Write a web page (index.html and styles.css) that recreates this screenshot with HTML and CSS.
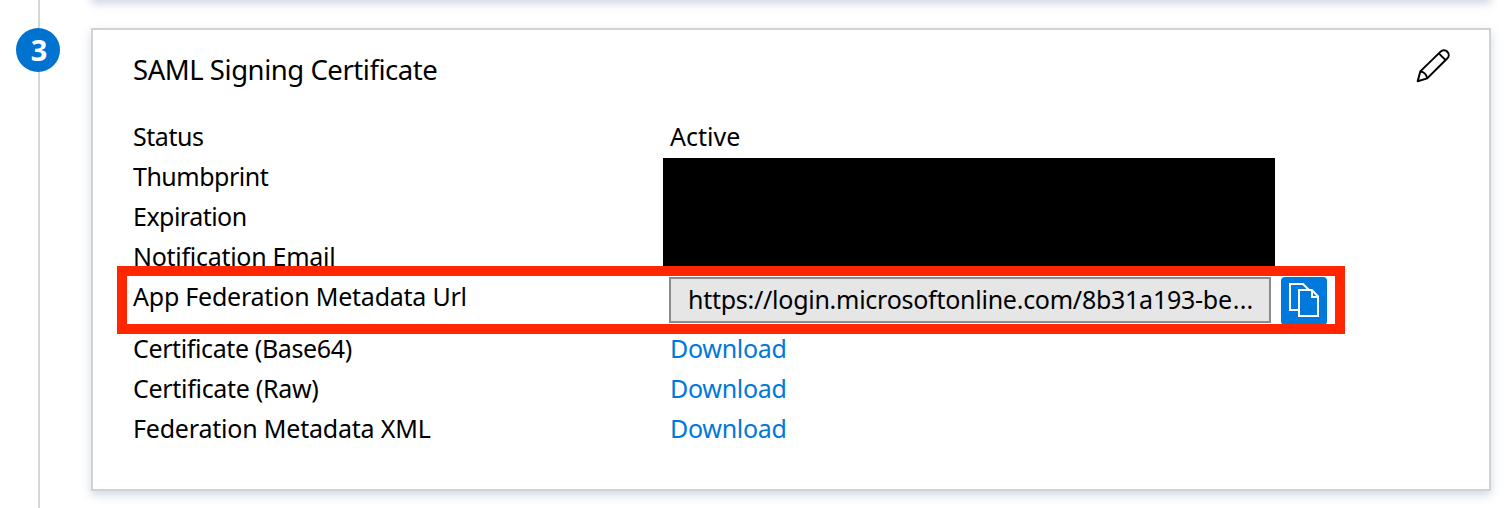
FILE: index.html
```html
<!DOCTYPE html>
<html lang="en">
<head>
<meta charset="utf-8">
<title>SAML Signing Certificate</title>
<link rel="stylesheet" href="styles.css">
</head>
<body>
<main class="steps">
  <div class="rail"><span class="step-number">3</span></div>
  <div class="cards">
    <section class="card card-previous"></section>
    <section class="card">
      <header class="card-header">
        <h2 class="card-title">SAML Signing Certificate</h2>
        <svg class="edit-icon" width="34" height="34" viewBox="0 0 34 34" fill="none" stroke="#000" stroke-width="2" stroke-linejoin="round">
          <path d="M1.7 32.3L4.3 22.4L24.6 2.6C26.6 0.7 29.6 0.9 31.3 2.7C33.1 4.5 33.2 7.4 31.4 9.3L11.2 29.4Z"/>
          <path d="M22.8 4.4L29.6 11.1M4.3 22.4C7.8 22.8 10.7 25.8 11.2 29.4"/>
        </svg>
      </header>
      <div class="details">
        <div class="row"><span class="label l-status">Status</span><span class="value">Active</span></div>
        <div class="row"><span class="label l-thumb">Thumbprint</span></div>
        <div class="row"><span class="label l-exp">Expiration</span></div>
        <div class="row"><span class="label l-mail">Notification Email</span></div>
        <div class="row row-url">
          <span class="label l-url">App Federation Metadata Url</span>
          <div class="url-field"><span class="url-text">https://login.microsoftonline.com/8b31a193-be</span><span class="dots">...</span></div>
          <div class="copy-button">
            <svg width="46" height="48" viewBox="0 0 46 48" fill="none" stroke="#fff" stroke-width="2">
              <path d="M17 33H9V7H22L28 13"/>
              <path d="M18 13H31L37 19.5V39H18Z"/>
              <path d="M31 13V20H37"/>
            </svg>
          </div>
        </div>
        <div class="row"><span class="label l-base">Certificate (Base64)</span><a class="value link">Download</a></div>
        <div class="row"><span class="label l-raw">Certificate (Raw)</span><a class="value link">Download</a></div>
        <div class="row"><span class="label l-xml">Federation Metadata XML</span><a class="value link">Download</a></div>
        <div class="redaction"></div>
        <div class="highlight"></div>
      </div>
    </section>
  </div>
</main>
</body>
</html>
```
FILE: styles.css
```css
* { box-sizing: border-box; }
body { margin: 0; background: #fff; color: #000; font-family: "Noto Sans", "Open Sans", sans-serif; overflow: hidden; }
.steps { display: flex; height: 508px; overflow: hidden; }
.rail { width: 78px; height: 508px; padding-top: 28px; display: flex; justify-content: center; align-items: flex-start; background: linear-gradient(#d6d6d6, #d6d6d6) 38px 0 / 2px 100% no-repeat; margin-right: 13px; padding-right: 2px; }
.step-number { width: 44px; height: 44px; border-radius: 50%; background: #0072cf; color: #fff; font-size: 29px; font-weight: 700; line-height: 43px; text-align: center; padding-left: 2px; }
.cards { width: 1400px; }
.card { height: 463px; border: 2px solid #d2d2d2; background: #fff; box-shadow: 0 4px 9px rgba(60, 90, 140, 0.23); }
.card-previous { height: 20px; margin-top: -20px; margin-bottom: 28px; }
.card-header { height: 86px; padding: 18px 39px 0 40px; display: flex; justify-content: space-between; align-items: flex-start; }
.card-title { margin: 0; font-size: 27.5px; line-height: 44px; font-weight: 400; letter-spacing: -0.46px; white-space: nowrap; }
.edit-icon { margin-top: 1px; }
.details { position: relative; padding-left: 40px; font-size: 25px; line-height: 40px; white-space: nowrap; }
.row { display: flex; height: 40px; }
.row-url { height: 52px; }
.label { width: 536px; }
.l-status { letter-spacing: -0.45px; }
.l-thumb { letter-spacing: -0.5px; }
.l-exp { letter-spacing: -0.52px; }
.l-mail { letter-spacing: -0.28px; }
.l-url { letter-spacing: -0.23px; }
.l-base { letter-spacing: -0.38px; }
.l-raw { letter-spacing: -0.3px; }
.l-xml { letter-spacing: -0.2px; }
.value { padding-left: 1px; }
.link { color: #0078dc; letter-spacing: -0.3px; }
.url-field { width: 602px; height: 46px; margin-top: 1px; border: 2px solid #8b8b8b; background: #e6e6e6; padding-left: 17px; line-height: 41px; }
.url-text { letter-spacing: -0.26px; }
.dots { letter-spacing: 0.2px; margin-left: 1px; }
.copy-button { width: 46px; height: 48px; margin: 1px 0 0 10px; border-radius: 4px; background: #0078dc; }
.copy-button svg { display: block; }
.redaction { position: absolute; left: 570px; top: 42px; width: 612px; height: 110px; background: #000; }
.highlight { position: absolute; left: 24px; top: 150px; width: 1228px; height: 68px; border: 10px solid #ff2600; }
```
